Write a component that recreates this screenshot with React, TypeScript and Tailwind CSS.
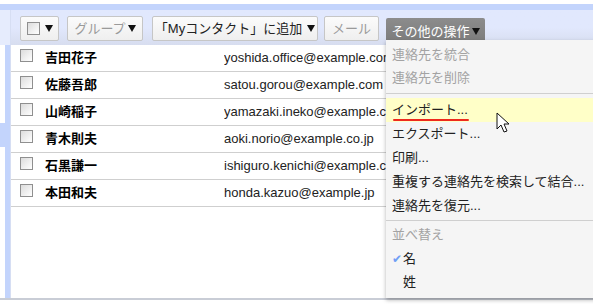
const contacts = [
  { name: '吉田花子', email: 'yoshida.office@example.com' },
  { name: '佐藤吾郎', email: 'satou.gorou@example.com' },
  { name: '山崎稲子', email: 'yamazaki.ineko@example.com' },
  { name: '青木則夫', email: 'aoki.norio@example.co.jp' },
  { name: '石黒謙一', email: 'ishiguro.kenichi@example.com' },
  { name: '本田和夫', email: 'honda.kazuo@example.jp' },
];

const font = { fontFamily: '"Liberation Sans", "Noto Sans CJK JP", sans-serif' };

function Box() {
  return <span className="inline-block h-[13px] w-[13px] border border-[#8f8f8f] bg-gradient-to-br from-[#dcdcdc] to-white" />;
}

function Caret() {
  return (
    <svg width="8" height="7" viewBox="0 0 8 7" className="ml-[2px]">
      <path d="M0 0 H8 L4 7 Z" fill="#111" />
    </svg>
  );
}

function Btn({ children, className = '' }: { children: React.ReactNode; className?: string }) {
  return (
    <div
      className={`flex h-[25px] items-center justify-center rounded-[2px] border border-[#c6c6c6] bg-gradient-to-b from-[#fbfbfb] to-[#efefef] text-[13px] ${className}`}
    >
      {children}
    </div>
  );
}

function Cursor() {
  return (
    <svg width="16" height="22" viewBox="0 0 16 22" className="absolute left-[496px] top-[112px]">
      <path d="M1 1 V17 L5 13 L8 20 L11 19 L8 12 H13 Z" fill="white" stroke="#111" strokeWidth="1" strokeLinejoin="round" />
    </svg>
  );
}

export default function App() {
  return (
    <div className="relative h-[304px] w-[593px] overflow-hidden bg-white text-[#222]" style={font}>
      <div className="h-[4px] bg-white" />
      <div className="h-[6px] bg-[#c3d4fc]" />
      <div className="flex h-[290px] border-b-2 border-[#c9cdd6]">
        <div className="flex w-[10px] flex-col">
          <div className="h-[35px] bg-[#e6ecfd]" />
          <div className="flex h-[78px]">
            <div className="w-[5px] bg-white" />
            <div className="w-[5px] bg-[#c3d4fc]" />
          </div>
          <div className="h-[24px] bg-[#c3d4fc]" />
          <div className="flex flex-1">
            <div className="w-[5px] bg-white" />
            <div className="w-[5px] bg-[#c3d4fc]" />
          </div>
        </div>
        <div className="flex-1 border-l border-[#d6def3]">
          <div className="flex h-[35px] items-center bg-gradient-to-b from-[#e1e8fd] via-[#e1e8fd] to-[#d7ddef] pl-[9px] pt-[2px]">
            <Btn className="w-[39px] gap-[3px]">
              <Box />
              <Caret />
            </Btn>
            <Btn className="ml-[8px] w-[76px] text-[#9a9a9a]">
              グループ
              <Caret />
            </Btn>
            <Btn className="ml-[9px] w-[166px] text-[#222]">
              「Myコンタクト」に追加
              <span className="ml-[3px]">
                <Caret />
              </span>
            </Btn>
            <Btn className="ml-[6px] w-[55px] text-[#9a9a9a]">メール</Btn>
            <div className="ml-[7px] flex h-[27px] w-[99px] items-center justify-center self-end rounded-t-[2px] bg-gradient-to-b from-[#8c8c8c] to-[#7a7a7a] text-[13px] text-white">
              その他の操作
              <Caret />
            </div>
          </div>
          {contacts.map((c) => (
            <div key={c.name} className="flex h-[27px] items-center border-b border-[#cfcfcf] text-[13px]">
              <div className="ml-[9px] w-[25px]">
                <Box />
              </div>
              <div className="w-[179px] font-bold text-black">{c.name}</div>
              <div className="w-[162px] overflow-hidden whitespace-nowrap">{c.email}</div>
            </div>
          ))}
        </div>
      </div>

      <div className="absolute left-[386px] top-[40px] h-[258px] w-[220px] bg-[#f5f5f5] pt-[3px] text-[13px] shadow-[0_2px_4px_rgba(0,0,0,0.3)]">
        <div className="flex h-[23px] items-center pl-[6px] text-[#a3a3a3]">連絡先を統合</div>
        <div className="flex h-[23px] items-center pl-[6px] text-[#a3a3a3]">連絡先を削除</div>
        <div className="my-[4px] border-t border-[#cfcfcf]" />
        <div className="relative flex h-[24px] items-center bg-[#ffffc8] pl-[6px] text-[#222]">
          インポート...
          <div className="absolute left-[7px] top-[21px] h-[2px] w-[76px] rounded-full bg-[#ee2a1d]" />
        </div>
        <div className="flex h-[24px] items-center pl-[6px]">エクスポート...</div>
        <div className="flex h-[24px] items-center pl-[6px]">印刷...</div>
        <div className="flex h-[24px] items-center pl-[6px]">重複する連絡先を検索して結合...</div>
        <div className="flex h-[24px] items-center pl-[6px]">連絡先を復元...</div>
        <div className="mb-[3px] mt-[2px] border-t border-[#cfcfcf]" />
        <div className="flex h-[22px] items-center pl-[6px] text-[#a3a3a3]">並べ替え</div>
        <div className="flex h-[26px] items-center pl-[6px]">
          <span className="w-[11px] text-[12px] leading-none text-[#6f9ef5]">✔</span>
          <span>名</span>
        </div>
        <div className="flex h-[19px] items-center pl-[17px]">姓</div>
      </div>
      <Cursor />
    </div>
  );
}
